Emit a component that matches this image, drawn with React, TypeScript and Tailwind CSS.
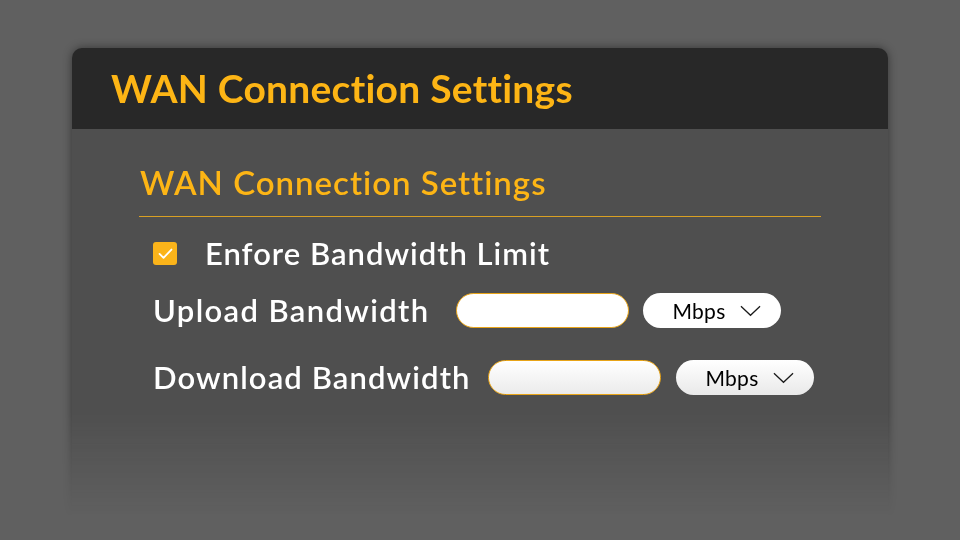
function UnitSelect({ shaded }: { shaded?: boolean }) {
  return (
    <div
      className={`flex h-[35px] w-[138px] items-center justify-center gap-[14px] rounded-full pl-[9px] text-[21px] text-black ${
        shaded ? "bg-gradient-to-b from-white to-[#e9e9e9]" : "bg-white"
      }`}
    >
      <span className="tracking-[0.3px]">Mbps</span>
      <svg viewBox="0 0 22 12" className="h-[12px] w-[21px]" fill="none" stroke="#1a1a1a" strokeWidth={1.3}>
        <polyline points="1,1 11,10.5 21,1" />
      </svg>
    </div>
  )
}

function BandwidthInput({ shaded }: { shaded?: boolean }) {
  return (
    <div
      className={`h-[35px] w-[173px] rounded-full border border-[#e8a418] ${
        shaded ? "bg-gradient-to-b from-white to-[#ebebeb]" : "bg-white"
      }`}
    />
  )
}

export default function App() {
  return (
    <div
      className="h-[540px] w-[960px] overflow-hidden bg-[#606060] pt-[38px] pl-[62px]"
      style={{ fontFamily: "Lato, 'Noto Sans', sans-serif" }}
    >
      <div className="w-[836px] p-[10px] [mask-image:linear-gradient(to_bottom,black_72%,transparent_92%)]">
        <div className="flex h-[500px] flex-col overflow-hidden rounded-t-[10px] bg-[#4f4f4f] shadow-[0_0_10px_rgba(0,0,0,0.45)]">
          <div className="flex h-[81px] shrink-0 items-center bg-[#282828] pl-[39px]">
            <h1 className="text-[39px] font-bold leading-none tracking-[0.25px] text-[#fdb515]">
              WAN Connection Settings
            </h1>
          </div>
          <div className="px-[67px] pt-[37px]">
            <h2 className="pl-px text-[33px] font-semibold leading-none tracking-[1px] text-[#fdb515]">
              WAN Connection Settings
            </h2>
            <div className="mt-[17px] border-b border-[#d9a023]" />
            <div className="mt-[21px] flex flex-col pl-[14px] text-white">
              <label className="flex items-center gap-[28px]">
                <span className="flex h-[23px] w-[24px] items-center justify-center rounded-[3px] bg-[#fbb41a]">
                  <svg viewBox="0 0 24 24" className="h-[19px] w-[19px]" fill="none" stroke="white" strokeWidth={2.3} strokeLinecap="round" strokeLinejoin="round">
                    <path d="M4.5 12.5l5 5L19.5 7" />
                  </svg>
                </span>
                <span className="text-[31px] font-semibold leading-none tracking-[1px]">Enfore Bandwidth Limit</span>
              </label>
              <div className="mt-[24px] flex items-center">
                <span className="w-[303px] text-[31px] font-semibold leading-none tracking-[1.35px]">Upload Bandwidth</span>
                <BandwidthInput />
                <div className="ml-[14px]">
                  <UnitSelect />
                </div>
              </div>
              <div className="mt-[32px] flex items-center">
                <span className="w-[335px] text-[31px] font-semibold leading-none tracking-[1.1px]">Download Bandwidth</span>
                <BandwidthInput shaded />
                <div className="ml-[15px]">
                  <UnitSelect shaded />
                </div>
              </div>
            </div>
          </div>
        </div>
      </div>
    </div>
  )
}
